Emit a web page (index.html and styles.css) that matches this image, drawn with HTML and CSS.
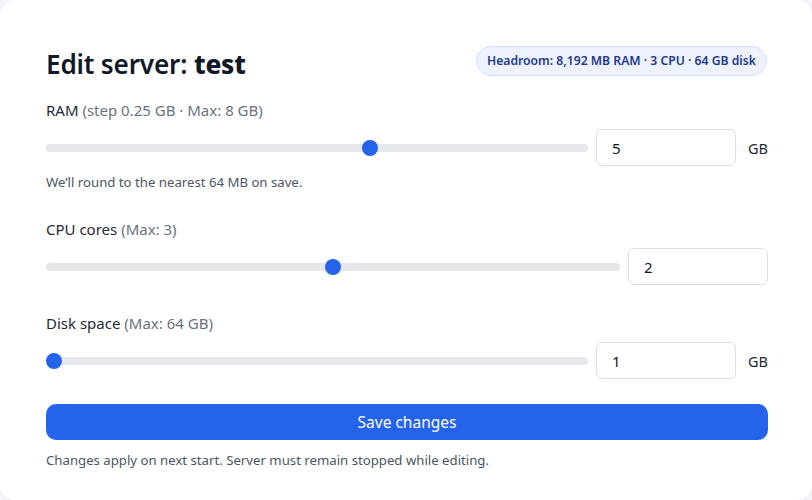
FILE: index.html
```html
<!DOCTYPE html>
<html lang="en">
<head>
<meta charset="utf-8">
<title>Edit server</title>
<link rel="stylesheet" href="styles.css">
</head>
<body>
<main class="card">
  <header class="head">
    <h1 class="title">Edit server: <strong>test</strong></h1>
    <span class="pill">Headroom: 8,192 MB RAM · 3 CPU · 64 GB disk</span>
  </header>

  <section class="field">
    <label class="label" for="ram">RAM <span class="muted">(step 0.25 GB · Max: 8 GB)</span></label>
    <div class="row">
      <input class="range" type="range" min="0.5" max="8" step="0.25" value="5">
      <input class="num" id="ram" type="text" value="5">
      <span class="unit">GB</span>
    </div>
    <p class="hint">We’ll round to the nearest 64 MB on save.</p>
  </section>

  <section class="field">
    <label class="label" for="cpu">CPU cores <span class="muted">(Max: 3)</span></label>
    <div class="row">
      <input class="range" type="range" min="1" max="3" step="1" value="2">
      <input class="num" id="cpu" type="text" value="2">
    </div>
  </section>

  <section class="field">
    <label class="label" for="disk">Disk space <span class="muted">(Max: 64 GB)</span></label>
    <div class="row">
      <input class="range" type="range" min="1" max="64" step="1" value="1">
      <input class="num" id="disk" type="text" value="1">
      <span class="unit">GB</span>
    </div>
  </section>

  <button class="save" type="button">Save changes</button>
  <p class="foot">Changes apply on next start. Server must remain stopped while editing.</p>
</main>
</body>
</html>
```

FILE: styles.css
```css
* { box-sizing: border-box; }
html, body { margin: 0; height: 100%; }
body {
  background: #f3f5fa;
  font-family: "Noto Sans", "Open Sans", "DejaVu Sans", sans-serif;
  color: #1f2937;
}
.card {
  background: #fff;
  border-radius: 14px;
  box-shadow: 0 0 0 1px #e6e9f2;
  min-height: 100%;
  padding: 47px 44px 30px 46px;
}
.head {
  display: flex;
  justify-content: space-between;
  align-items: center;
  margin-bottom: 19px;
}
.title {
  margin: 0;
  font-size: 26.2px;
  line-height: 34px;
  font-weight: 600;
  color: #111827;
  letter-spacing: -0.2px;
}
.title strong { font-weight: 800; }
.pill {
  background: #eef2ff;
  border: 1px solid #d6defb;
  color: #1e3a8a;
  border-radius: 999px;
  padding: 0 10px;
  height: 30px;
  line-height: 28px;
  font-size: 12.2px;
  font-weight: 600;
  margin-top: -6px;
  margin-right: 1px;
}
.field { margin-bottom: 28px; }
.label {
  display: block;
  font-size: 15px;
  line-height: 20px;
  color: #1f2937;
  margin-bottom: 9px;
}
.muted { color: #6b7280; }
.row {
  display: flex;
  align-items: center;
  gap: 8px;
}
.range {
  flex: 1;
  margin: 0;
  height: 16px;
  background: transparent;
  -webkit-appearance: none;
  appearance: none;
}
.range::-webkit-slider-runnable-track {
  height: 8px;
  background: #e5e7eb;
  border-radius: 4px;
}
.range::-webkit-slider-thumb {
  -webkit-appearance: none;
  appearance: none;
  width: 16px;
  height: 16px;
  margin-top: -4px;
  border-radius: 50%;
  background: #2563eb;
  border: none;
}
.num {
  width: 140px;
  height: 37px;
  border: 1px solid #dcdfe4;
  border-radius: 6px;
  padding: 0 15px;
  font: inherit;
  font-size: 15px;
  color: #111827;
  background: #fff;
}
.unit {
  margin-left: 4px;
  width: 20px;
  font-size: 14.5px;
  color: #1f2937;
}
.hint {
  margin: 7px 0 0;
  font-size: 13.2px;
  line-height: 18px;
  color: #4b5563;
}
.save {
  display: block;
  width: 100%;
  height: 36px;
  margin-top: -3px;
  border: none;
  border-radius: 10px;
  background: #2563eb;
  color: #fff;
  font: inherit;
  font-size: 15.5px;
}
.foot {
  margin: 11px 0 0;
  font-size: 13.2px;
  line-height: 18px;
  color: #4b5563;
}
```
